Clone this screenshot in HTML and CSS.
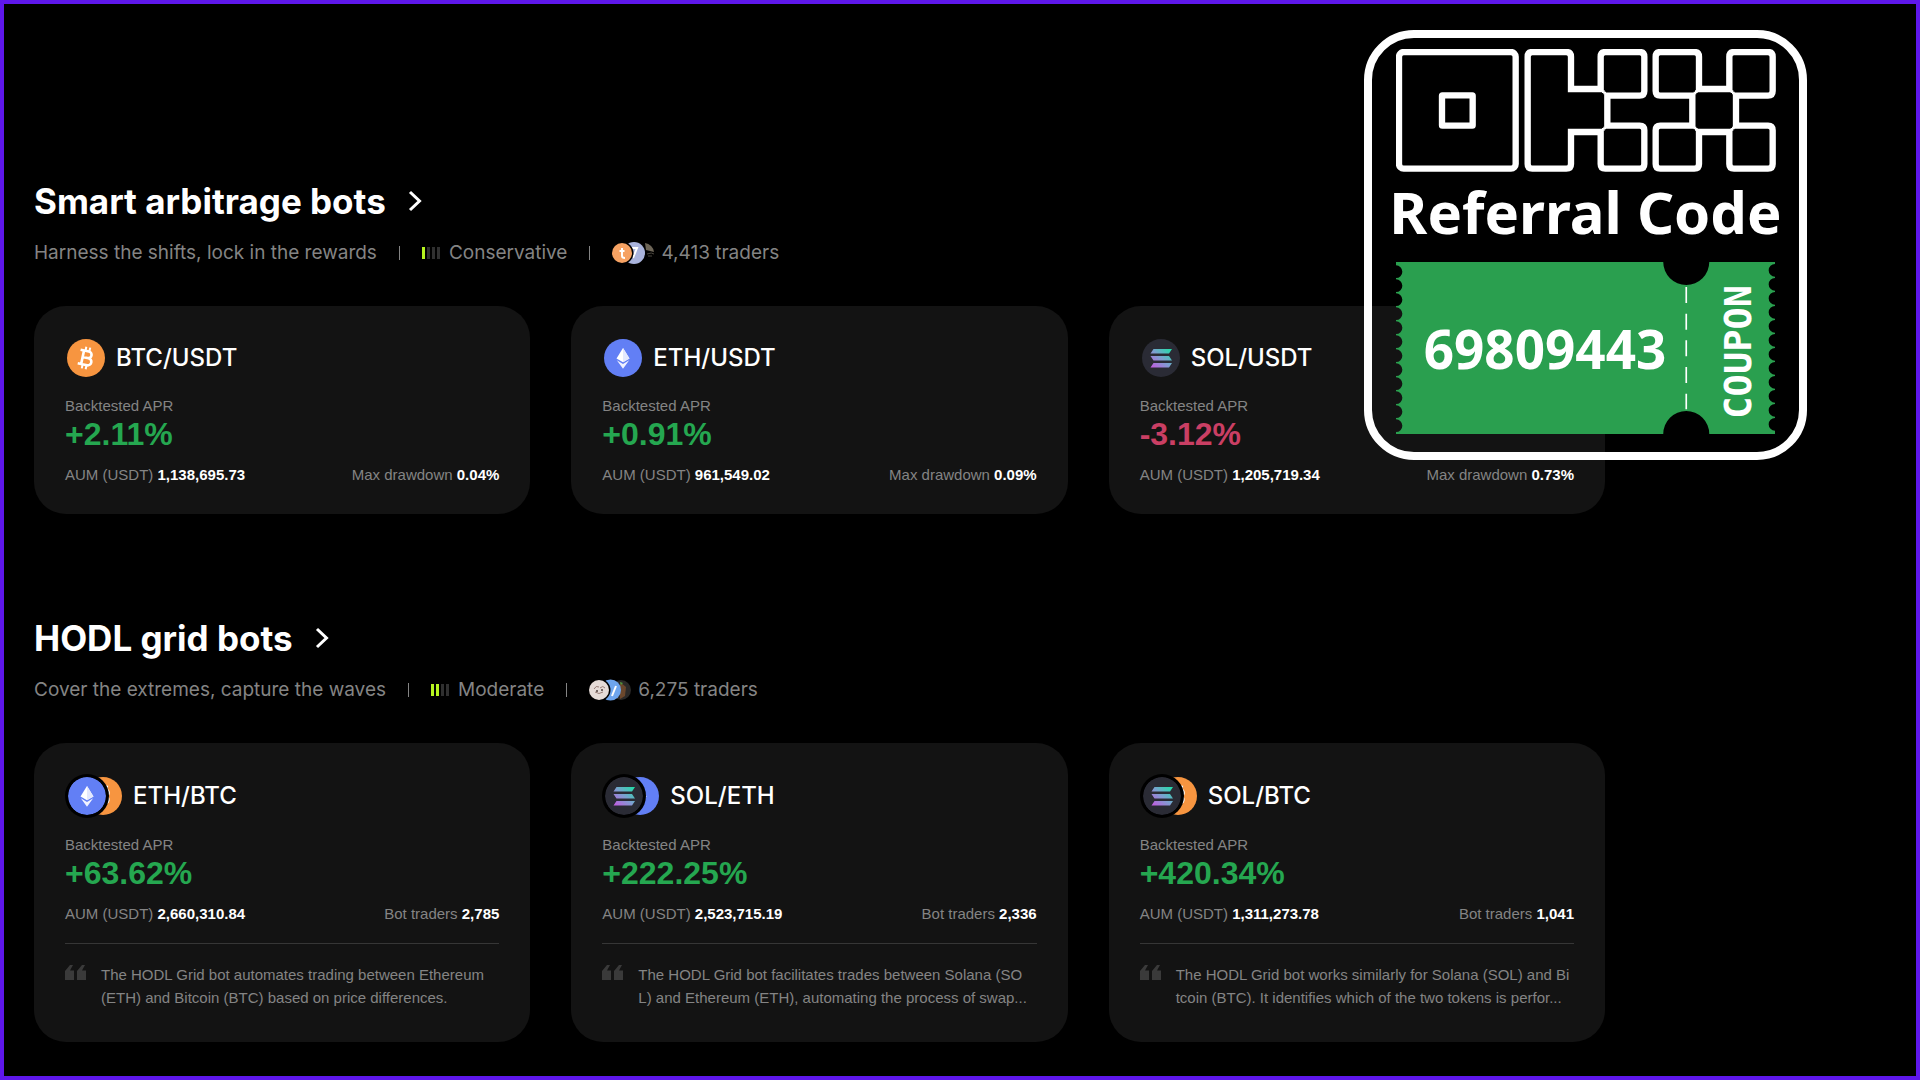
FILE: index.html
```html
<!DOCTYPE html>
<html lang="en">
<head>
  <meta charset="UTF-8">
  <meta name="viewport" content="width=device-width, initial-scale=1.0">
  <title>Trading bots</title>
  <link rel="stylesheet" href="styles.css">
</head>
<body>

<!-- shared icons -->
<svg class="sprite" aria-hidden="true">
  <defs>
    <linearGradient id="solFill" gradientUnits="userSpaceOnUse" x1="10" y1="29" x2="28" y2="9">
      <stop offset="0" stop-color="#c25be0"/>
      <stop offset="0.5" stop-color="#7d9fd0"/>
      <stop offset="1" stop-color="#1fe0a8"/>
    </linearGradient>
  </defs>
  <symbol id="btc" viewBox="0 0 38 38">
    <circle cx="19" cy="19" r="19" fill="#f79540"/>
    <g transform="rotate(12 19 19)" fill="none" stroke="#fff" stroke-width="2.6">
      <path d="M12 12h8.500a3.300 3.300 0 0 1 0 6.700h-5M15.500 18.700h6a3.600 3.600 0 0 1 0 7.200H12M15.500 12v14"/>
      <path d="M17 8v4M21 8v4M17 26v4M21 26v4" stroke-width="2"/>
    </g>
  </symbol>
  <symbol id="eth" viewBox="0 0 38 38">
    <circle cx="19" cy="19" r="19" fill="#627ff5"/>
    <path d="M19 9l6.500 10.500L19 23.300l-6.500-3.800z" fill="#fff"/>
    <path d="M19 9l6.500 10.500L19 23.300z" fill="#e3e8fd"/>
    <path d="M12.800 21.300L19 25l6.200-3.700L19 29.800z" fill="#f0f2ff"/>
  </symbol>
  <symbol id="sol" viewBox="0 0 38 38">
    <circle cx="19" cy="19" r="19" fill="#2a2b35"/>
    <path d="M11.500 10H30l-3 4.500H8.500zM8.500 17H27l3 4.500H11.500zM11.500 24H30l-3 4.500H8.500z" fill="url(#solFill)"/>
  </symbol>
  <symbol id="chevron" viewBox="0 0 14 22">
    <path d="M2 2l9.500 9L2 20" fill="none" stroke="#fff" stroke-width="3"/>
  </symbol>
  <symbol id="quote" viewBox="0 0 21 15">
    <path d="M0 15V6l5-6h3L5 5.500h4V15zM12 15V6l5-6h3l-3 5.500h4V15z" fill="#3a3a3a"/>
  </symbol>
</svg>

<main class="bots">

  <section class="bot-group">
    <h2><a href="#">Smart arbitrage bots <svg class="chevron"><use href="#chevron"/></svg></a></h2>
    <div class="summary">
      <span>Harness the shifts, lock in the rewards</span>
      <i class="sep"></i>
      <span class="risk"><span class="level"><i class="on"></i><i></i><i></i><i></i></span>Conservative</span>
      <i class="sep"></i>
      <span class="traders">
        <svg class="avatars" viewBox="0 0 43 22">
          <path d="M33 1a10 10 0 0 1 9 9l-8-2z" fill="#6d6557"/>
          <path d="M35 12q5-2 7 0M36 14h4" fill="none" stroke="#4b463e"/>
          <circle cx="22" cy="11" r="11" fill="#a9b3dc"/>
          <path d="M20 6h5l-4 10" fill="none" stroke="#fff" stroke-width="2"/>
          <circle cx="10.500" cy="11" r="11" fill="#000"/>
          <circle cx="10" cy="11" r="10" fill="#f6a263"/>
          <path d="M10 6v8q0 2 3 2M7.500 9h5" fill="none" stroke="#fff" stroke-width="2"/>
        </svg>
        4,413 traders
      </span>
    </div>

    <div class="cards">
      <article class="card">
        <h3 class="pair"><svg class="coin"><use href="#btc"/></svg>BTC/USDT</h3>
        <p class="label">Backtested APR</p>
        <p class="apr">+2.11%</p>
        <div class="stats"><span>AUM (USDT) <b>1,138,695.73</b></span><span>Max drawdown <b>0.04%</b></span></div>
      </article>
      <article class="card">
        <h3 class="pair"><svg class="coin"><use href="#eth"/></svg>ETH/USDT</h3>
        <p class="label">Backtested APR</p>
        <p class="apr">+0.91%</p>
        <div class="stats"><span>AUM (USDT) <b>961,549.02</b></span><span>Max drawdown <b>0.09%</b></span></div>
      </article>
      <article class="card">
        <h3 class="pair"><svg class="coin"><use href="#sol"/></svg>SOL/USDT</h3>
        <p class="label">Backtested APR</p>
        <p class="apr down">-3.12%</p>
        <div class="stats"><span>AUM (USDT) <b>1,205,719.34</b></span><span>Max drawdown <b>0.73%</b></span></div>
      </article>
    </div>
  </section>

  <section class="bot-group">
    <h2><a href="#">HODL grid bots <svg class="chevron"><use href="#chevron"/></svg></a></h2>
    <div class="summary">
      <span>Cover the extremes, capture the waves</span>
      <i class="sep"></i>
      <span class="risk"><span class="level"><i class="on"></i><i class="on"></i><i></i><i></i></span>Moderate</span>
      <i class="sep"></i>
      <span class="traders">
        <svg class="avatars" viewBox="0 0 43 22">
          <circle cx="32" cy="11" r="10" fill="#2b2928"/>
          <path d="M31 3l6 5-1 9-5 3z" fill="#6b472c"/>
          <path d="M31 3l3 1-2 2z" fill="#4d9a3c"/>
          <circle cx="21.500" cy="11" r="10.500" fill="#6ea5ee"/>
          <path d="M27 7l-4 10" fill="none" stroke="#fff" stroke-width="2"/>
          <circle cx="10.500" cy="11" r="11" fill="#000"/>
          <circle cx="10" cy="11" r="10" fill="#e6dcd8"/>
          <path d="M5 10q2-4 5-2M11 9q3-3 5 0M6 13q4 3 8 0" fill="none" stroke="#9a7f78"/>
          <circle cx="8" cy="12" r="1" fill="#4b3d3a"/>
          <circle cx="13" cy="11" r="1" fill="#4b3d3a"/>
        </svg>
        6,275 traders
      </span>
    </div>

    <div class="cards">
      <article class="card">
        <h3 class="pair duo"><span class="coins"><svg class="coin"><use href="#eth"/></svg><svg class="coin"><use href="#btc"/></svg></span>ETH/BTC</h3>
        <p class="label">Backtested APR</p>
        <p class="apr">+63.62%</p>
        <div class="stats"><span>AUM (USDT) <b>2,660,310.84</b></span><span>Bot traders <b>2,785</b></span></div>
        <div class="note">
          <svg class="quote"><use href="#quote"/></svg>
          <p>The HODL Grid bot automates trading between Ethereum<br>(ETH) and Bitcoin (BTC) based on price differences.</p>
        </div>
      </article>
      <article class="card">
        <h3 class="pair duo"><span class="coins"><svg class="coin"><use href="#sol"/></svg><svg class="coin"><use href="#eth"/></svg></span>SOL/ETH</h3>
        <p class="label">Backtested APR</p>
        <p class="apr">+222.25%</p>
        <div class="stats"><span>AUM (USDT) <b>2,523,715.19</b></span><span>Bot traders <b>2,336</b></span></div>
        <div class="note">
          <svg class="quote"><use href="#quote"/></svg>
          <p>The HODL Grid bot facilitates trades between Solana (SO<br>L) and Ethereum (ETH), automating the process of swap...</p>
        </div>
      </article>
      <article class="card">
        <h3 class="pair duo"><span class="coins"><svg class="coin"><use href="#sol"/></svg><svg class="coin"><use href="#btc"/></svg></span>SOL/BTC</h3>
        <p class="label">Backtested APR</p>
        <p class="apr">+420.34%</p>
        <div class="stats"><span>AUM (USDT) <b>1,311,273.78</b></span><span>Bot traders <b>1,041</b></span></div>
        <div class="note">
          <svg class="quote"><use href="#quote"/></svg>
          <p>The HODL Grid bot works similarly for Solana (SOL) and Bi<br>tcoin (BTC). It identifies which of the two tokens is perfor...</p>
        </div>
      </article>
    </div>
  </section>

</main>

<!-- referral badge, floats over the cards -->
<aside class="referral">
  <svg class="okx" viewBox="167 117 1140 369" role="img" aria-label="OKX">
    <g fill="none" stroke="#fff" stroke-width="19">
      <rect x="176" y="126" width="350" height="350" rx="14"/>
      <rect x="305" y="256" width="92" height="91" rx="1"/>
      <path d="M692 237H781V140q0-14 14-14H898q14 0 14 14V243q0 14-14 14H801V347H898q14 0 14 14V462q0 14-14 14H795q-14 0-14-14V366H692V462q0 14-14 14H576q-14 0-14-14V140q0-14 14-14H678q14 0 14 14z"/>
      <path d="M1076 237H1167V140q0-14 14-14H1283q14 0 14 14V243q0 14-14 14H1187V347H1283q14 0 14 14V462q0 14-14 14H1181q-14 0-14-14V366H1076V462q0 14-14 14H960q-14 0-14-14V361q0-14 14-14H1056V257H960q-14 0-14-14V140q0-14 14-14H1062q14 0 14 14z"/>
      <!-- corners where the blocks touch -->
      <path stroke-width="4" d="M785 247h12M791 241v12M785 356h12M791 350v12M1060 247h12M1066 241v12M1060 356h12M1066 350v12M1171 247h12M1177 241v12M1171 356h12M1177 350v12"/>
    </g>
  </svg>
  <h2 class="referral-title">Referral Code</h2>
  <div class="ticket">
    <svg class="ticket-bg" viewBox="0 0 1136 516" preserveAspectRatio="none" aria-hidden="true">
      <path fill="#2a9f4f" d="M0 0H801a69 69 0 0 0 138 0H1136v6
        a19 19 0 0 0 0 38v4a19 19 0 0 0 0 38v4a19 19 0 0 0 0 38v4a19 19 0 0 0 0 38v4
        a19 19 0 0 0 0 38v4a19 19 0 0 0 0 38v4a19 19 0 0 0 0 38v4a19 19 0 0 0 0 38v4
        a19 19 0 0 0 0 38v4a19 19 0 0 0 0 38v4a19 19 0 0 0 0 38v4a19 19 0 0 0 0 38v4
        V516H939a69 69 0 0 0-138 0H0v-6
        a19 19 0 0 0 0-38v-4a19 19 0 0 0 0-38v-4a19 19 0 0 0 0-38v-4a19 19 0 0 0 0-38v-4
        a19 19 0 0 0 0-38v-4a19 19 0 0 0 0-38v-4a19 19 0 0 0 0-38v-4a19 19 0 0 0 0-38v-4
        a19 19 0 0 0 0-38v-4a19 19 0 0 0 0-38v-4a19 19 0 0 0 0-38v-4a19 19 0 0 0 0-38v-4z"/>
      <path d="M870 75V442" stroke="#fff" stroke-width="5" stroke-dasharray="48 32"/>
    </svg>
    <strong class="code">69809443</strong>
    <span class="coupon">COUPON</span>
  </div>
</aside>

</body>
</html>
```

FILE: styles.css
```css
* {
  box-sizing: border-box;
}

body {
  margin: 0;
  min-height: 100vh;
  border: 4px solid #5e17eb;
  background-color: #000;
  color: #fff;
  font-family: "Liberation Sans", Arial, sans-serif;
  font-size: 15px;
  line-height: 20px;
}

h2, h3, p {
  margin: 0;
}

.sprite {
  position: absolute;
  width: 0;
  height: 0;
}

.bots {
  display: flex;
  flex-direction: column;
  gap: 102px;
  padding: 175px 311px 0 30px;
}

.bot-group h2,
.summary,
.pair {
  font-family: Inter, "Liberation Sans", sans-serif;
}

.bot-group h2 {
  font-size: 35px;
  font-weight: 700;
  line-height: 44px;
}

.bot-group h2 a {
  display: inline-flex;
  align-items: center;
  gap: 22px;
  color: #fff;
  text-decoration: none;
}

.chevron {
  width: 14px;
  height: 22px;
}

.summary {
  display: flex;
  align-items: center;
  gap: 22px;
  margin: 16px 0 39px;
  color: #848484;
  font-size: 19px;
  line-height: 28px;
}

.sep {
  width: 1px;
  height: 14px;
  background-color: #848484;
}

.risk {
  display: flex;
  align-items: center;
  gap: 9px;
}

.level {
  display: flex;
  gap: 2px;
}

.level i {
  width: 3px;
  height: 12px;
  background-color: #303030;
}

.level .on {
  background-color: #b6f41f;
}

.traders {
  display: flex;
  align-items: center;
  gap: 6px;
}

.avatars {
  width: 43px;
  height: 22px;
}

.cards {
  display: grid;
  grid-template-columns: repeat(3, minmax(0, 1fr));
  gap: 41px;
}

.card {
  padding: 30px 31px 29px;
  border-radius: 32px;
  background-color: #131313;
}

.pair {
  display: flex;
  align-items: center;
  gap: 11px;
  height: 44px;
  margin-bottom: 16px;
  padding-left: 2px;
  font-size: 24px;
  font-weight: 500;
}

.pair.duo {
  height: 46px;
  padding-left: 0;
}

.coin {
  flex: none;
  width: 38px;
  height: 38px;
}

.coins {
  display: flex;
}

.coins .coin:first-child {
  z-index: 1;
  width: 44px;
  height: 44px;
  padding: 3px;
  border-radius: 50%;
  background-color: #000;
}

.coins .coin:last-child {
  margin: 3px 0 0 -25px;
}

.label,
.stats {
  color: #848484;
}

.apr {
  margin-bottom: 13px;
  color: #25a750;
  font-size: 32px;
  font-weight: 700;
  line-height: 36px;
}

.apr.down {
  color: #ca3f64;
}

.stats {
  display: flex;
  justify-content: space-between;
}

.stats b {
  color: #fff;
}

.note {
  display: flex;
  gap: 15px;
  margin-top: 19px;
  padding: 19px 0 4px;
  border-top: 1px solid #363636;
  color: #848484;
  line-height: 23px;
  white-space: nowrap;
}

.quote {
  flex: none;
  width: 21px;
  height: 15px;
  margin-top: 2px;
}

.referral {
  position: absolute;
  top: 30px;
  right: 113px;
  display: flex;
  flex-direction: column;
  align-items: center;
  width: 443px;
  padding: 11px 24px 18px;
  border: 8px solid #fff;
  border-radius: 50px;
  font-family: "Noto Sans", "Open Sans", sans-serif;
}

.okx {
  width: 380px;
  height: 123px;
}

.referral-title {
  margin: 5px 0 15px;
  font-size: 58px;
  font-weight: 700;
  line-height: 70px;
  white-space: nowrap;
}

.ticket {
  position: relative;
  display: flex;
  align-items: center;
  width: 379px;
  height: 172px;
}

.ticket-bg {
  position: absolute;
  width: 100%;
  height: 100%;
}

.code {
  position: relative;
  width: 290px;
  padding: 2px 0 0 8px;
  text-align: center;
  font-size: 53px;
  line-height: 60px;
}

.coupon {
  position: relative;
  flex: 1;
  display: flex;
  align-items: center;
  justify-content: center;
  margin-left: 16px;
  padding-bottom: 8px;
  writing-mode: vertical-rl;
  transform: rotate(180deg);
  font-family: "DejaVu Sans Mono", monospace;
  font-size: 37px;
  font-weight: 700;
}
```
